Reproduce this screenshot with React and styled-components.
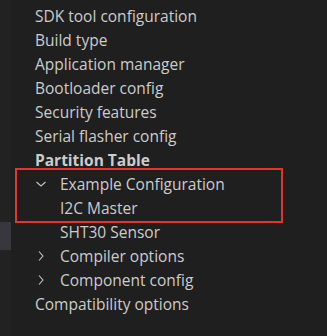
import React from "react";
import styled, { createGlobalStyle } from "styled-components";

const GlobalStyle = createGlobalStyle`
  html, body {
    margin: 0;
    padding: 0;
    background: #1f1f1f;
  }
`;

const Page = styled.div`
  display: flex;
  width: 327px;
  height: 336px;
  overflow: hidden;
  background: #1f1f1f;
  font-family: "Open Sans", "Liberation Sans", Arial, sans-serif;
`;

const Gutter = styled.div`
  width: 11px;
  flex-shrink: 0;
  background: #222222;
  padding-top: 222px;
`;

const GutterMark = styled.div`
  height: 28px;
  background: #37373d;
`;

const Tree = styled.div`
  position: relative;
  flex: 1;
  padding-top: 4px;
  padding-left: 24px;
`;

const Row = styled.div`
  display: flex;
  align-items: center;
  height: 24px;
  padding-left: ${(p) => p.$indent || 0}px;
  color: #cccccc;
  font-size: 15.5px;
  font-weight: ${(p) => (p.$bold ? 700 : 400)};
  white-space: nowrap;
`;

const Twistie = styled.span`
  display: inline-flex;
  justify-content: center;
  width: 12px;
  margin-right: 13px;
`;

const Highlight = styled.div`
  position: absolute;
  left: 4px;
  top: 168px;
  width: 268px;
  height: 55px;
  box-sizing: border-box;
  border: 2px solid #e8322f;
  pointer-events: none;
`;

const Chevron = ({ open }) => (
  <svg width="12" height="12" viewBox="0 0 12 12" fill="none">
    {open ? (
      <path d="M1.5 4 L6 8 L10.5 4" stroke="#c5c5c5" strokeWidth="1.1" />
    ) : (
      <path d="M4 1.5 L8 6 L4 10.5" stroke="#c5c5c5" strokeWidth="1.1" />
    )}
  </svg>
);

const items = [
  { label: "SDK tool configuration" },
  { label: "Build type" },
  { label: "Application manager" },
  { label: "Bootloader config" },
  { label: "Security features" },
  { label: "Serial flasher config" },
  { label: "Partition Table", bold: true },
  { label: "Example Configuration", twistie: "open" },
  { label: "I2C Master", indent: 25 },
  { label: "SHT30 Sensor", indent: 25 },
  { label: "Compiler options", twistie: "closed" },
  { label: "Component config", twistie: "closed" },
  { label: "Compatibility options" },
];

const App = () => {
  return (
    <Page>
      <GlobalStyle />
      <Gutter>
        <GutterMark />
      </Gutter>
      <Tree>
        {items.map((it) => (
          <Row key={it.label} $bold={it.bold} $indent={it.indent}>
            {it.twistie && (
              <Twistie>
                <Chevron open={it.twistie === "open"} />
              </Twistie>
            )}
            {it.label}
          </Row>
        ))}
        <Highlight />
      </Tree>
    </Page>
  );
};

export default App;
